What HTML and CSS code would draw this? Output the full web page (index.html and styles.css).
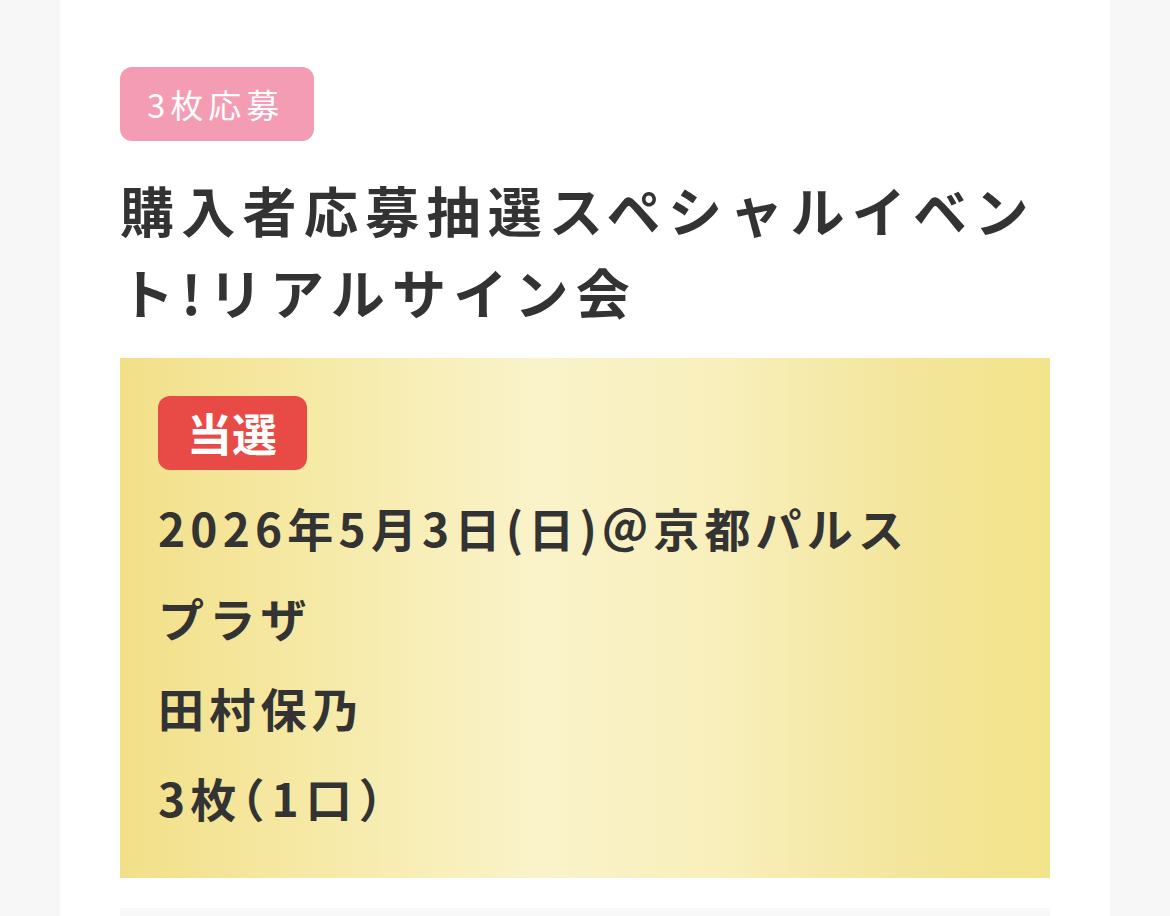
FILE: index.html
```html
<!DOCTYPE html>
<html lang="ja">
<head>
<meta charset="utf-8">
<link rel="stylesheet" href="styles.css">
</head>
<body>
<div class="page">
  <div class="card">
    <span class="tag">3枚応募</span>
    <h1 class="title">購入者応募抽選スペシャルイベント!リアルサイン会</h1>
    <div class="result">
      <span class="win">当選</span>
      <div class="info">
        <p class="line">2026年5月3日(日)＠京都パルスプラザ</p>
        <p class="line">田村保乃</p>
        <p class="line">3枚<span class="paren">（1口）</span></p>
      </div>
    </div>
    <div class="next"></div>
  </div>
</div>
</body>
</html>
```
FILE: styles.css
```css
html, body {
  margin: 0;
  padding: 0;
  background: #f7f7f7;
  height: 100%;
  overflow: hidden;
}
.page {
  padding: 0 60px;
  font-family: "Noto Sans CJK JP", "Noto Sans", sans-serif;
  color: #333;
}
.card {
  background: #fff;
  padding: 67px 60px 0;
  min-height: 916px;
  box-sizing: border-box;
}
.tag {
  display: inline-block;
  background: #f49cb3;
  color: #fff;
  font-size: 33px;
  font-weight: 400;
  letter-spacing: 5px;
  line-height: 74px;
  height: 74px;
  padding: 0 0 0 27px;
  border-radius: 12px;
  width: 194px;
  box-sizing: border-box;
}
.title {
  margin: 28px 0 25px;
  font-size: 54px;
  font-weight: 700;
  letter-spacing: 7.3px;
  line-height: 82px;
}
.result {
  background: linear-gradient(90deg, #f2df88 0%, #f6eaa8 22%, #faf3ca 45%, #f8efbb 65%, #f3e59a 85%, #f3e48b 100%);
  padding: 38px 38px 35px;
  height: 520px;
  box-sizing: border-box;
}
.win {
  display: inline-block;
  background: #e84b45;
  color: #fff;
  font-size: 45px;
  font-weight: 700;
  letter-spacing: 0;
  line-height: 74px;
  height: 74px;
  width: 149px;
  box-sizing: border-box;
  padding-left: 29px;
  border-radius: 12px;
}
.info {
  margin-top: 12px;
  width: 775px;
}
.line {
  margin: 0;
  font-size: 46px;
  font-weight: 700;
  letter-spacing: 5.2px;
  line-height: 90px;
}
.paren {
  font-feature-settings: "halt";
  letter-spacing: 7px;
}
.next {
  margin-top: 30px;
  height: 40px;
  background: #f8f8f8;
}
```
